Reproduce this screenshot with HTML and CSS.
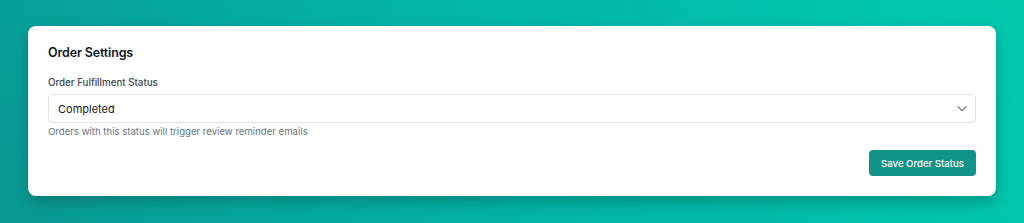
FILE: index.html
```html
<!DOCTYPE html>
<html lang="en">

<head>
    <meta charset="UTF-8">
    <meta name="viewport" content="width=device-width, initial-scale=1.0">
    <title>Order Settings</title>
    <link rel="stylesheet" href="styles.css">
</head>

<body>
    <div class="card">
        <h2 class="card-title">Order Settings</h2>

        <label class="field-label" for="orderStatus">Order Fulfillment Status</label>
        <div class="select-wrap">
            <select id="orderStatus" class="select">
                <option>Pending</option>
                <option>Processing</option>
                <option selected>Completed</option>
                <option>Cancelled</option>
            </select>
            <svg class="chevron" width="16" height="16" viewBox="0 0 24 24" fill="none" stroke="currentColor"
                stroke-width="1.8" stroke-linecap="round" stroke-linejoin="round">
                <path d="M6 10l6 6 6-6" />
            </svg>
        </div>
        <p class="help-text">Orders with this status will trigger review reminder emails</p>

        <div class="actions">
            <button class="btn-primary">Save Order Status</button>
        </div>
    </div>
</body>

</html>
```

FILE: styles.css
```css
* {
    box-sizing: border-box;
}

html,
body {
    height: 100%;
}

body {
    margin: 0;
    padding: 26px 28px;
    font-family: Inter, 'Noto Sans', sans-serif;
    background: linear-gradient(60deg, #0a9893 0%, #03b3a6 45%, #00c9ae 100%);
    color: #111827;
}

.card {
    background: #fff;
    border-radius: 8px;
    box-shadow: 0 6px 14px rgba(0, 40, 40, 0.28);
    padding: 19px 20px 20px;
}

.card-title {
    margin: 0 0 15px;
    font-size: 12.5px;
    line-height: 16px;
    letter-spacing: -0.15px;
    font-weight: 600;
    color: #111827;
}

.field-label {
    display: block;
    font-size: 9.75px;
    line-height: 14px;
    font-weight: 500;
    color: #3f4753;
    margin-bottom: 4px;
}

.select-wrap {
    position: relative;
}

.select {
    display: block;
    width: 100%;
    height: 29px;
    padding: 0 30px 0 9px;
    font-family: inherit;
    font-size: 11px;
    color: #111827;
    background: #fff;
    border: 1px solid #e2e4e8;
    border-radius: 4px;
    appearance: none;
    -webkit-appearance: none;
    outline: none;
}

.chevron {
    position: absolute;
    right: 6px;
    top: 6px;
    color: #6b7280;
    pointer-events: none;
}

.help-text {
    margin: 2px 0 0;
    font-size: 9.6px;
    line-height: 14px;
    color: #6b7280;
}

.actions {
    display: flex;
    justify-content: flex-end;
    margin-top: 11px;
}

.btn-primary {
    height: 26px;
    padding: 0 12px;
    font-family: inherit;
    font-size: 9.6px;
    font-weight: 500;
    color: #fff;
    background-color: #119487;
    border: none;
    border-radius: 4px;
    cursor: pointer;
}

.btn-primary:hover {
    background-color: #0f766e;
}
```
